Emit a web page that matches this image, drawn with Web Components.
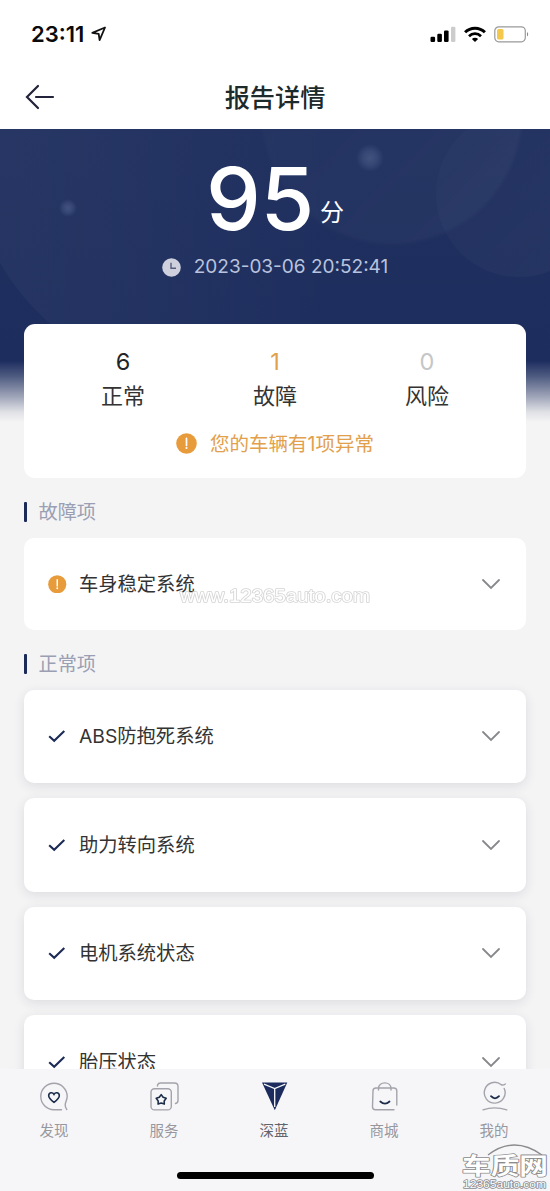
<!DOCTYPE html>
<html lang="zh-CN">
<head>
<meta charset="utf-8">
<title>报告详情</title>
<style>
html,body{margin:0;padding:0}
body{width:550px;height:1191px;overflow:hidden;background:#f4f4f5;font-family:Inter,"Noto Sans CJK SC",sans-serif;color:#333}
</style>
</head>
<body>
<report-app></report-app>
<script>
const define = (name, html) => {
  const t = document.createElement('template');
  t.innerHTML = html;
  customElements.define(name, class extends HTMLElement {
    constructor() {
      super();
      this.attachShadow({mode: 'open'}).appendChild(t.content.cloneNode(true));
    }
  });
};

define('status-bar', `
<style>
:host{display:flex;height:66px;box-sizing:border-box;padding:2px 20px 0 31px;align-items:center;background:#fff;color:#0a0a0a}
.time{font-size:22px;font-weight:600;line-height:26px;letter-spacing:0;width:60px;white-space:nowrap}
.loc{flex:1}
svg{display:block}
.right{display:flex;gap:8px;align-items:center}
</style>
<span class="time">23:11</span>
<span class="loc"><svg width="16" height="16" viewBox="0 0 16 16"><path d="M14 1.5 1.3 6.8l6.4 1 .9 6.4z" fill="none" stroke="#111" stroke-width="1.8" stroke-linejoin="round"/></svg></span>
<span class="right">
<svg width="26" height="17" viewBox="0 0 26 17"><rect x=".5" y="10.7" width="4.6" height="5.3" rx="1.2"/><rect x="7.3" y="7.8" width="4.6" height="8.2" rx="1.2"/><rect x="14" y="4.4" width="4.6" height="11.6" rx="1.2"/><rect x="21" y=".8" width="4.4" height="15.2" rx="1.2" fill="#ccc"/></svg>
<svg width="22" height="17" viewBox="0 0 22 17" fill="none" stroke="#000" stroke-width="3"><path d="M1.1 6.3a14 14 0 0 1 19.8 0"/><path d="M5 10.2a8.5 8.5 0 0 1 12 0" stroke-width="2.7"/><path d="M11 16 7.9 13a4.3 4.3 0 0 1 6.2 0z" fill="#000" stroke="none"/></svg>
<svg width="36" height="17" viewBox="0 0 36 17"><rect x=".8" y=".8" width="30.5" height="15" rx="4" fill="#fff" stroke="#999" stroke-width="1.2"/><rect x="3" y="3" width="6.5" height="10.6" rx="1.5" fill="#f3c84b"/><path d="M33 6q2.4 2.2 0 4.6z" fill="#888"/></svg>
</span>`);

define('nav-header', `
<style>
:host{display:grid;grid-template-columns:60px 1fr 60px;height:63px;align-items:center;background:#fff}
svg{display:block;margin:-2px 0 0 25px}
h1{margin:0;text-align:center;font-size:25.2px;line-height:36px;font-weight:500;color:#1c2a2c}
</style>
<svg width="30" height="28" viewBox="0 0 30 28" fill="none" stroke="#23233b" stroke-width="2.2" stroke-linecap="round"><path d="M13 3 2 14l11 11M11 14h17"/></svg>
<h1><slot></slot></h1>`);

define('score-hero', `
<style>
:host{display:grid;height:295px;background:linear-gradient(#20305f 0,#1d2d5d 230px,#1e2e5f 232px,#4d5a80 247px,#a0a6b9 268px,#e0e1e6 283px,#f4f4f5 293px)}
.art,.content{grid-area:1/1}
.art{width:550px;height:231px;display:block}
.content{display:flex;flex-direction:column;align-items:center}
.score{display:flex;margin-top:17px;color:#fff;height:106px}
b{font-weight:500;font-size:87px;line-height:106px;letter-spacing:-.2px}
i{font-style:normal;font-size:24px;margin:52px 0 0 6px;line-height:30px}
.date{display:flex;align-items:center;gap:13px;margin-top:1px;color:#b9c3dd;font-size:19px;line-height:28px}
.date svg{display:block}
</style>
<svg class="art" viewBox="0 0 550 231">
<defs><linearGradient id="a"><stop stop-color="#fff" stop-opacity=".035"/><stop offset=".3" stop-color="#fff" stop-opacity=".025"/><stop offset=".8" stop-color="#fff" stop-opacity="0"/></linearGradient>
<linearGradient id="c" x1="0" y1="0" x2="1" y2="1"><stop stop-color="#fff" stop-opacity=".01"/><stop offset="1" stop-color="#fff" stop-opacity=".035"/></linearGradient>
<radialGradient id="d"><stop stop-color="#8191bd" stop-opacity=".32"/><stop offset=".5" stop-color="#8191bd" stop-opacity=".2"/><stop offset="1" stop-color="#8191bd" stop-opacity="0"/></radialGradient>
<filter id="f"><feGaussianBlur stdDeviation="1.5"/></filter></defs>
<circle cx="200" cy="20" r="230" fill="url(#a)"/><circle cx="392" cy="-15" r="130" fill="url(#c)" filter="url(#f)"/><circle cx="519" cy="65" r="83" fill="url(#c)"/>
<circle cx="370" cy="29" r="14" fill="url(#d)"/><circle cx="68" cy="79" r="9" fill="url(#d)"/>
</svg>
<div class="content">
<div class="score"><b>95</b><i>分</i></div>
<div class="date"><svg width="19" height="19" viewBox="0 0 19 19"><circle cx="9.5" cy="9.5" r="9.3" fill="#ced1dd"/><path d="M9 4.8v5.4h5" fill="none" stroke="#565d7c" stroke-width="1.4"/></svg><span>2023-03-06 20:52:41</span></div>
</div>`);

define('alert-dot', `
<style>
:host{display:block;width:var(--s,21px);height:var(--s,21px)}svg{display:block}
</style>
<svg width="100%" height="100%" viewBox="0 0 20 20"><circle cx="10" cy="10" r="9.8" fill="#e89b3a"/><path d="M10 5.2v6.6" stroke="#fff" stroke-width="1.6" stroke-linecap="round"/><circle cx="10" cy="14.3" r="1" fill="#fff"/></svg>`);

define('stat-item', `
<style>
:host{display:flex;flex-direction:column;align-items:center;color:var(--c,#1f2528)}
.n{font-size:23.5px;line-height:30px;font-weight:400}
.l{font-size:22px;line-height:32px;margin-top:3px;color:#333}
</style>
<span class="n"><slot name="value"></slot></span><span class="l"><slot></slot></span>`);

define('summary-card', `
<style>
:host{display:block;box-sizing:border-box;height:154px;margin:-100px 24px 0;padding-top:23px;background:#fff;border-radius:11px;position:relative}
.stats{display:grid;grid-template-columns:repeat(3,152px);justify-content:center}
.msg{display:flex;justify-content:center;align-items:center;gap:13px;color:#e2a04c;font-size:19.5px;line-height:28px;margin-top:17px}
.msg span{padding-top:1px}
</style>
<div class="stats"><slot></slot></div>
<div class="msg"><alert-dot></alert-dot><span><slot name="message"></slot></span></div>`);

define('section-title', `
<style>
:host{display:flex;align-items:center;gap:11.5px;margin-left:24px;height:28px;color:#9b9fb3;font-size:19.2px;line-height:28px}
:host::before{content:"";width:3px;height:20px;background:#1c2a5a;border-radius:1px}
</style><slot></slot>`);

define('check-card', `
<style>
:host{display:flex;box-sizing:border-box;align-items:center;height:93.5px;margin:0 24px;padding:0 25px 0 24px;background:#fff;border-radius:10px;box-shadow:var(--shadow,0 3px 12px rgba(40,40,60,.11));font-size:19.3px;line-height:28px;color:#333}
.icon{width:31px;display:flex}
.t{flex:1}
svg{display:block}
</style>
<span class="icon"><slot name="icon"><svg width="18" height="14" viewBox="0 0 18 14"><path d="m1.2 7.2 5 4.6L16.3 2" fill="none" stroke="#1c2b55" stroke-width="2.1"/></svg></slot></span>
<span class="t"><slot></slot></span>
<svg width="20" height="12" viewBox="0 0 20 12"><path d="m2 2 8 8 8-8" fill="none" stroke="#87888b" stroke-width="1.8" stroke-linecap="round"/></svg>`);

define('tab-item', `
<style>
:host{display:flex;flex-direction:column;align-items:center;color:var(--c,#97989f);font-size:14.5px;line-height:20px;gap:7.5px;margin-left:-1px;margin-right:1px}
::slotted(svg){display:block;width:32px;height:32px}
</style><slot name="icon"></slot><span><slot></slot></span>`);

define('tab-bar', `
<style>
:host{display:block;position:absolute;left:0;top:1069px;width:550px;height:122px;background:#f6f6f8}
nav{display:grid;grid-template-columns:repeat(5,110px);padding-top:12px;height:70px}
.home{width:197px;height:7px;border-radius:4px;background:#000;margin:21px auto 0}
</style><nav><slot></slot></nav><div class="home"></div>`);

define('url-mark', `
<style>
:host{display:block;position:absolute;left:180px;top:585px;pointer-events:none}
text{fill:#fff;stroke:#cdcdcd;stroke-width:1.6px;paint-order:stroke;stroke-linejoin:round;font-family:"Liberation Sans",sans-serif}
svg{display:block;overflow:visible;opacity:.85}
</style><svg width="192" height="24"><text x="0" y="17" textLength="190" lengthAdjust="spacingAndGlyphs" font-size="19">www.12365auto.com</text></svg>`);

define('site-mark', `
<style>
:host{display:block;position:absolute;left:460px;top:1142px;width:90px;height:49px}
svg{display:block;overflow:visible}
text{fill:#fff;stroke:#8b8b8e;paint-order:stroke;stroke-linejoin:round}
</style>
<svg width="90" height="49" viewBox="0 0 90 49"><path d="M28 13Q54-7 82 13" fill="none" stroke="#8b8b8e" stroke-width="1.3"/>
<text x="2" y="31.5" font-size="23" font-weight="700" font-family="Noto Sans CJK SC" textLength="86" lengthAdjust="spacingAndGlyphs" stroke-width="1.6">车质网</text>
<text x="3" y="46" font-size="10.5" font-family="Liberation Sans" textLength="83" lengthAdjust="spacingAndGlyphs" stroke-width="1.5">12365auto.com</text></svg>`);

define('report-app', `
<style>
:host{display:block;position:relative;width:550px;height:1191px;overflow:hidden;background:#f4f4f5}
.fault{--shadow:none;height:92px;margin-top:12px}
.fault alert-dot{--s:18.5px}
.first{margin-top:20px}
.second{margin-top:20px}
.list{display:flex;flex-direction:column;gap:15px;margin-top:11.5px}
</style>
<status-bar></status-bar>
<nav-header>报告详情</nav-header>
<score-hero></score-hero>
<summary-card>
<stat-item><span slot="value">6</span>正常</stat-item>
<stat-item style="--c:#e2a04c"><span slot="value">1</span>故障</stat-item>
<stat-item style="--c:#c6c6c8"><span slot="value">0</span>风险</stat-item>
<span slot="message">您的车辆有1项异常</span>
</summary-card>
<section-title class="first">故障项</section-title>
<check-card class="fault"><alert-dot slot="icon"></alert-dot>车身稳定系统</check-card>
<section-title class="second">正常项</section-title>
<div class="list">
<check-card>ABS防抱死系统</check-card>
<check-card>助力转向系统</check-card>
<check-card>电机系统状态</check-card>
<check-card>胎压状态</check-card>
</div>
<tab-bar>
<tab-item><svg slot="icon" viewBox="0 0 32 32" fill="none" stroke="#a3a3ab" stroke-width="1.4" stroke-linecap="round"><path d="M23.5 28.7H15.8A13.2 13.2 0 1 1 29.2 15.5c0 3-1.7 5.3-2 8-.2 2 .5 3.5 1.6 5"/><path d="M16 21.3c-3.3-2.5-5.3-4.4-5.3-6.6 0-3.3 3.8-4 5.3-1.3 1.5-2.7 5.3-2 5.3 1.3 0 2.2-2 4.1-5.3 6.6z" stroke="#1c2d4a" stroke-width="1.6"/></svg>发现</tab-item>
<tab-item><svg slot="icon" viewBox="0 0 32 32" fill="none" stroke="#a3a3ab" stroke-width="1.4" stroke-linecap="round"><path d="M9.5 5V4q.7-2 3-2h14q3.5 0 3.5 3.5v14q0 2.5-2.5 3"/><rect x="3" y="7.7" width="20.3" height="21.2" rx="3.5"/><path d="m13.2 13.6 1.9 2.7 3.1 1-2 2.6.1 3.2-3.1-1-3.1 1 .1-3.2-2-2.6 3.1-1z" stroke="#1c2d4a" stroke-width="1.6" stroke-linejoin="round"/></svg>服务</tab-item>
<tab-item style="--c:#62646d"><svg slot="icon" viewBox="0 0 32 32"><path d="M4 1.5h25.3L16.8 29.2z" fill="#1c2b5e"/><path d="M6 3.2 16.7 7.5 27.3 3.2M16.7 7.5V26" fill="none" stroke="#f6f6f8" stroke-width="1.3"/></svg>深蓝</tab-item>
<tab-item><svg slot="icon" viewBox="0 0 32 32" fill="none" stroke="#a3a3ab" stroke-width="1.4" stroke-linecap="round"><path d="M28.8 24V10Q28.8 7 25.8 7H8Q5 7 5 10L4.5 25.7Q4.5 28.8 7.5 28.8H26M10.5 9V7.4C10.5 0 23 0 23 7.4V9"/><path d="M12.3 20.5q4.7 4.3 9.2 0" stroke="#1c2d4a" stroke-width="1.8"/></svg>商城</tab-item>
<tab-item><svg slot="icon" viewBox="0 0 32 32" fill="none" stroke="#a3a3ab" stroke-width="1.4" stroke-linecap="round"><path d="M27.3 3q-2 1.6-4 .7"/><path d="M23.3 3.7A10.4 10.4 0 1 0 26.2 7.5"/><path d="M5 28.8Q16.4 25 28.8 28.8"/><path d="M13 15.2q4 4.2 8 0" stroke="#1c2d4a" stroke-width="1.8"/></svg>我的</tab-item>
</tab-bar>
<url-mark></url-mark>
<site-mark></site-mark>`);
</script>
</body>
</html>
